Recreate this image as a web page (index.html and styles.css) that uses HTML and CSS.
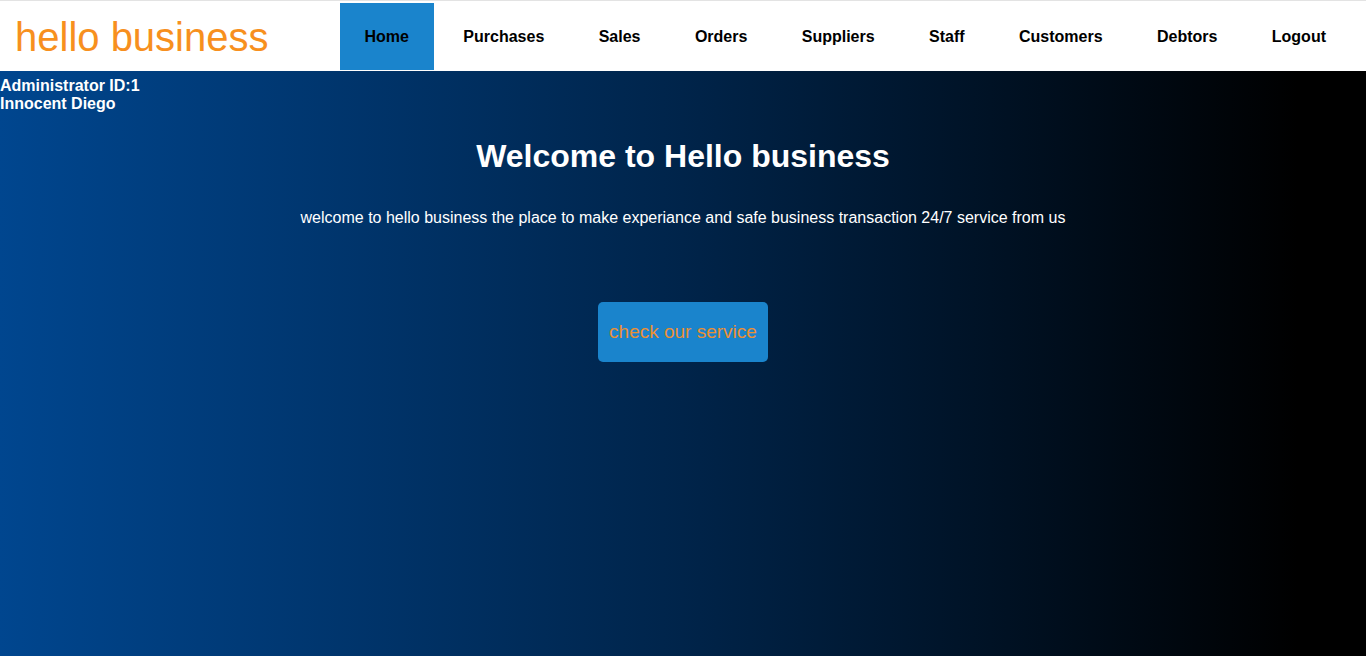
FILE: index.html
```html
<!DOCTYPE html>
<html>
<head>
<meta charset="utf-8">
<title>hello business</title>
<link rel="stylesheet" href="styles.css">
</head>
<body>
<header class="topbar">
  <div class="logo">hello business</div>
  <nav class="nav">
    <a class="nav-item active" href="#">Home</a>
    <a class="nav-item" href="#">Purchases</a>
    <a class="nav-item" href="#">Sales</a>
    <a class="nav-item" href="#">Orders</a>
    <a class="nav-item" href="#">Suppliers</a>
    <a class="nav-item" href="#">Staff</a>
    <a class="nav-item" href="#">Customers</a>
    <a class="nav-item" href="#">Debtors</a>
    <a class="nav-item" href="#">Logout</a>
  </nav>
</header>
<main class="hero">
  <div class="user-info">
    <div>Administrator ID:1</div>
    <div>Innocent Diego</div>
  </div>
  <h1 class="title">Welcome to Hello business</h1>
  <p class="lead">welcome to hello business the place to make experiance and safe business transaction 24/7 service from us</p>
  <div class="cta-wrap">
    <a class="cta" href="#">check our service</a>
  </div>
</main>
</body>
</html>
```
FILE: styles.css
```css
html, body {
  margin: 0;
  padding: 0;
  height: 100%;
}
body {
  font-family: "Liberation Sans", Arial, sans-serif;
  display: flex;
  flex-direction: column;
  background: #000;
}
.topbar {
  display: flex;
  align-items: flex-start;
  background: #fff;
  border-top: 1px solid #e3e3e3;
  height: 70px;
  flex-shrink: 0;
}
.logo {
  font-size: 40px;
  color: #f7901e;
  padding: 13px 0 0 15px;
  line-height: 46px;
}
.nav {
  margin-left: auto;
  margin-right: 15px;
  padding-top: 2px;
  display: flex;
  gap: 4.4px;
}
.nav-item {
  display: block;
  padding: 0 25px;
  height: 67px;
  line-height: 67px;
  font-weight: bold;
  font-size: 16px;
  color: #000;
  text-decoration: none;
}
.nav-item.active {
  background: #1a84cc;
}
.hero {
  flex: 1;
  background: linear-gradient(to right, #00468f 0%, #00244a 50%, #000 95%);
  color: #fff;
  padding-top: 6px;
}
.user-info {
  font-weight: bold;
  font-size: 16px;
  line-height: 18px;
}
.title {
  margin: 25px 0 0;
  text-align: center;
  font-size: 32px;
  font-weight: bold;
  line-height: 37px;
}
.lead {
  margin: 34px 0 0;
  text-align: center;
  font-size: 16px;
  line-height: 18px;
}
.cta-wrap {
  display: flex;
  justify-content: center;
  margin-top: 75px;
}
.cta {
  display: block;
  width: 170px;
  height: 60px;
  line-height: 60px;
  text-align: center;
  background: #1a84cc;
  border-radius: 5px;
  color: #ea9034;
  font-size: 19px;
  text-decoration: none;
}
```
